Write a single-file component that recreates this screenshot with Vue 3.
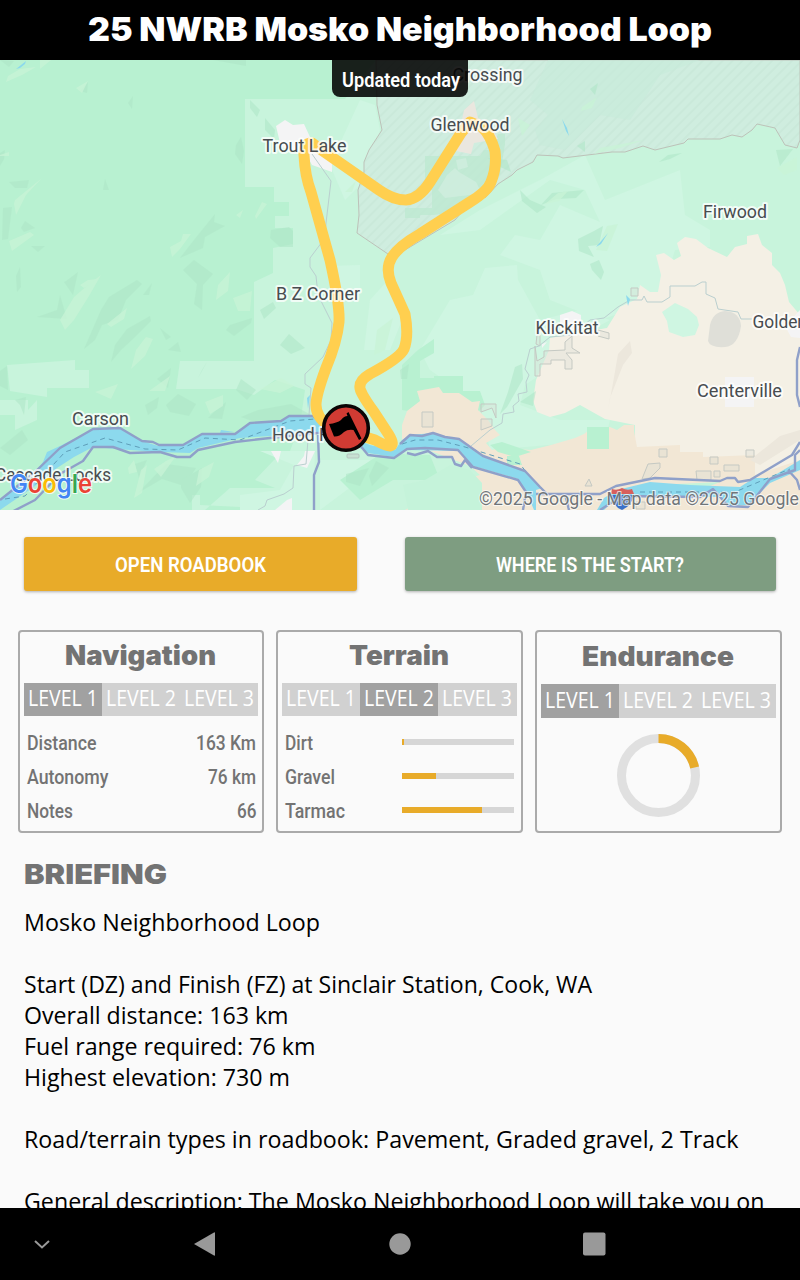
<script setup>
import { h } from 'vue';

// Single line of text squeezed or stretched to a known width.
const FitText = (props) => h('svg', { width: props.width, height: '1em', overflow: 'visible' }, [
  h('text', { x: 0, y: '.8em', textLength: props.width, lengthAdjust: 'spacingAndGlyphs', fill: 'currentColor' }, props.text)
]);
FitText.props = ['text', 'width'];

const levels = [['LEVEL 1', 70], ['LEVEL 2', 70], ['LEVEL 3', 70]];

const cards = [
  { title: 'Navigation', width: 151, level: 0 },
  { title: 'Terrain', width: 100, level: 1 },
  { title: 'Endurance', width: 152, level: 0 }
];

const stats = [
  { label: 'Distance', lw: 69.5, value: '163 Km', vw: 60 },
  { label: 'Autonomy', lw: 81.5, value: '76 km', vw: 48 },
  { label: 'Notes', lw: 46, value: '66', vw: 19.5 }
];

const terrain = [
  { label: 'Dirt', width: 28, percent: 2 },
  { label: 'Gravel', width: 50, percent: 30.4 },
  { label: 'Tarmac', width: 60, percent: 71.5 }
];

const briefing = [
  ['Mosko Neighborhood Loop', 296],
  null,
  ['Start (DZ) and Finish (FZ) at Sinclair Station, Cook, WA', 568],
  ['Overall distance: 163 km', 264.5],
  ['Fuel range required: 76 km', 291.5],
  ['Highest elevation: 730 m', 266],
  null,
  ['Road/terrain types in roadbook: Pavement, Graded gravel, 2 Track', 714.5],
  null,
  ['General description: The Mosko Neighborhood Loop will take you on', 740.5]
];

const places = [
  { name: 'Crossing', x: 452.5, y: 81, width: 70 },
  { name: 'Glenwood', x: 430.5, y: 131, width: 79 },
  { name: 'Trout Lake', x: 262.5, y: 152, width: 84 },
  { name: 'Firwood', x: 703, y: 218, width: 64 },
  { name: 'B Z Corner', x: 276, y: 300, width: 84 },
  { name: 'Klickitat', x: 535.5, y: 333.5, width: 63 },
  { name: 'Goldendale', x: 752.5, y: 328, width: 87 },
  { name: 'Centerville', x: 697, y: 397, width: 85 },
  { name: 'Carson', x: 72, y: 425, width: 57 },
  { name: 'Hood River', x: 272, y: 441, width: 86 },
  { name: 'Cascade Locks', x: -5, y: 481, width: 116 }
];

// Relief facets on the forest, darker and lighter than the base green.
const darkFacets = [
  '0,60 14,61 9,67', '80,91 88,82 87,93', '128,103 133,96 132,109', '236,145 241,137 244,151 242,164 235,154',
  '250,100 260,110 257,117 250,108', '265,118 275,130 274,139 265,130', '0,153 5,150 4,159 0,166',
  '9,182 29,180 27,188 15,188', '3,208 12,207 8,239 2,240', '105,179 109,190 103,190', '21,228 25,221 35,228 24,232',
  '31,246 45,246 38,252', '194,240 215,214 214,222 225,226 205,237 203,248 180,258', '271,230 289,227 293,231 293,247 280,247 270,238',
  '213,60 246,60 246,66', '16,276 20,267 21,287 17,292', '37,317 57,310 60,295 67,319', '66,281 78,272 73,295 64,282',
  '101,310 109,297 137,280 142,284 126,300 118,320 102,325 95,340 84,349', '127,329 150,316 151,321 134,338 121,350 111,362 115,345',
  '143,295 152,283 149,295', '160,328 171,337 166,340', '168,350 178,342 181,352', '183,270 194,260 213,274 203,285 202,310 194,304 197,284',
  '230,325 252,318 251,323 234,336 226,330', '260,310 273,302 276,308 264,319', '280,345 289,334 305,348 291,354',
  '157,379 171,368 168,388', '198,378 207,362 202,370', '236,390 241,379 256,390 247,400', '166,405 178,394 196,404 189,416 170,412',
  '214,412 226,402 222,419 208,418', '241,417 258,410 291,404 313,416 277,421 260,424', '145,405 159,397 157,408 148,415',
  '15,400 26,397 24,415 20,405', '0,371 7,366 8,390 0,386', '0,448 22,430 28,440 10,455', '166,464 196,468 184,486 162,479 138,493',
  '181,480 202,468 201,487 190,503 181,488', '135,464 147,460 139,478', '346,474 369,468 360,486 346,482',
  '376,461 389,468 372,486 369,476', '541,205 552,193 584,190 576,198 556,199', '578,239 594,231 603,226 599,245 588,246 594,257 579,251',
  '488,158 507,160 511,172 496,165', '577,146 585,141 585,152', '590,89 598,83 595,95', '659,162 668,155 682,153 670,159',
  '776,150 793,149 780,166', '520,190 530,200 546,207 537,213 522,201', '515,367 522,364 523,379 507,407 500,414 508,392',
  '400,370 409,364 407,379 401,379', '520,402 536,391 533,406', '590,264 599,260 604,272 601,280 592,270'
];
const lightFacets = [
  '8,76 20,69 36,67 22,75 6,82', '40,60 51,60 40,69', '76,88 88,81 82,93', '0,155 9,152 9,156 0,156', '15,200 42,178 26,195 16,215 14,204',
  '9,241 30,232 34,235 12,251', '170,247 181,241 183,234 191,234 180,249 172,257', '236,215 243,210 240,218', '255,216 262,202 267,204 256,219',
  '345,192 356,181 352,192', '60,320 74,297 89,284 101,275 89,296 74,320 65,330', '107,324 127,308 124,319 111,327',
  '136,350 146,337 153,339 145,356 131,369', '80,285 88,280 98,279 84,288', '218,285 230,272 228,291 216,300', '233,298 252,291 250,311 238,311',
  '95,392 118,384 111,399', '149,391 170,376 165,391', '205,402 223,395 223,406 210,414', '260,389 281,378 294,386 280,393',
  '128,468 134,460 137,472 129,474', '141,470 147,465 142,493 134,498', '154,469 166,461 176,456 161,477', '199,470 214,462 209,477 196,486',
  '68,495 83,480 99,474 86,492', '545,204 558,193 568,191 559,201', '600,148 644,140 620,148 594,154', '582,107 597,97 592,108 581,111',
  '518,118 530,125 522,136', '777,168 797,157 797,170 784,175', '596,250 607,226 618,224 607,251', '377,330 393,318 385,350 374,355'
];

const blocks = [
  '535,346 535,376 540,376 540,364 551,364 551,360 565,360 565,369 572,369 572,360 566,353 580,353 572,348 572,336 565,342 565,350 544,351 544,357 537,361',
  '422,412 433,412 433,427 422,427', '481,404 496,404 496,418 492,408 481,412', '481,419 492,419 492,426 481,430',
  '537,335 540,335 540,346 536,344', '598,330 609,333 609,339 598,336', '631,288 638,288 638,296 631,296',
  '659,449 667,449 667,457 659,457', '648,464 660,463 660,468 650,478 642,479', '696,471 711,471 711,480 697,480',
  '710,457 718,457 718,464 710,464', '724,465 739,465 739,471 724,471', '746,450 754,450 754,457 746,457',
  '589,479 592,486 585,486', '714,471 720,471 720,477 714,477', '636,502 645,502 645,509 636,509'
];
</script>

<template>
  <div class="screen">
    <header class="topbar"><FitText class="title" text="25 NWRB Mosko Neighborhood Loop" :width="624" /></header>

    <div class="map">
      <svg class="map-canvas" viewBox="0 60 800 450" width="800" height="450">
        <defs>
          <pattern id="hatch" width="7" height="7" patternUnits="userSpaceOnUse" patternTransform="rotate(45)">
            <rect width="7" height="7" fill="#cfeddf" />
            <rect width="2" height="7" fill="#cae9da" />
          </pattern>
        </defs>
        <rect y="60" width="800" height="450" fill="#b8f1d1" />
        <!-- lower ground -->
        <path d="M245 99H345L376 60H800V510H300L200 505V495H192V510H205L230 488H275L255 480L274 460 290 451 300 425 305 390 275 380 254 395 236 389H176L180 361H254V282L273 273V248L293 244V228H275V216H289V202H274V187H245Z" fill="#c8f4dc" />
        <path d="M7 365L75 360V370H89V388H47V397L10 391ZM28 410L37 400V420L15 430V415ZM0 400H28V415H0Z" fill="#c8f4dc" />
        <path d="M360 100L375 105 380 130 365 180 345 200 330 165ZM330 266L360 265 360 290 345 300ZM370 300L388 280 402 320 390 350 364 350ZM440 235L480 210 540 180 585 155 605 200 680 170 685 215 710 230 710 247 675 250 660 300 600 320 550 300 540 270 500 255 515 235 540 240 560 205 600 222 585 190 550 180 480 230ZM485 268L517 265 518 280 540 320 580 310 610 320 555 350 540 375 525 385 520 405 560 420 610 420 605 440 490 450 480 405 430 370 420 350 450 300 473 295Z" fill="#cff6e2" />
        <path d="M260 451H315L313 510H240V495L280 490 294 465ZM320 460H370L360 480 320 510Z" fill="#cff6e2" />
        <path d="M418 350L434 339V353L420 361V378H434V376H463V391H480L485 405 470 420 402 410V365Z" fill="#b8f1d1" />
        <path d="M387 450L408 455 430 455 440 480 430 480H393L360 500 340 480Z" fill="#b8f1d1" />
        <!-- open country -->
        <path d="M656 255L664 253 674 260 681 256 677 243 685 237 696 239 708 248 727 257 735 247 747 244 747 236 758 234 762 245 772 253V265L780 273 785 285 789 302 800 315V510H635V425L605 419 580 405 565 413 550 417 537 412 533 401 536 380 549 350 550 338 607 328 620 307 637 299 640 285 650 292 658 292 661 275Z" fill="#f4f0e5" />
        <path d="M402 425L407 411 420 401 417 391 439 387 443 393 459 393 472 402 480 401 478 410 488 420 495 430 500 435 486 443 492 450 500 448 531 450 551 445 575 438 584 434 592 428 610 427 617 430 624 425H634V431L637 447 680 445V452H703V457L755 455V475L800 460V510H405L460 480 480 475 470 466 402 440Z" fill="#f2e7d5" />
        <path d="M587 427H609V449H587ZM507 456L519 456 522 465 507 465ZM490 445L502 442 531 452 515 457 498 452Z" fill="#b8f1d1" />
        <path d="M662 312L675 303 688 309 697 317 699 325 695 335 683 337 669 332 667 321Z" fill="#cff6e2" />
        <path d="M408 510L403 485 425 480 450 465 470 470 482 483 482 510ZM655 485L720 482 700 490 648 491Z" fill="#c5f3da" />
        <path d="M710 325Q713 312 725 311Q740 312 741 326Q738 346 725 347Q710 348 708 341Z" fill="#dfdfd8" />
        <path d="M618 354L630 341 632 353 623 365 610 398 608 410 613 383ZM750 460L780 436 800 430V440L760 465Z" fill="#ece7dc" />
        <path d="M725 377H754V407H725ZM800 310L785 326 791 337 800 338ZM560 315L572 311 581 315V330H560ZM542 344L547 342 542 348ZM276 126L285 120 293 125 304 124 310 137 325 150 332 162V172L312 165 306 154 281 147ZM271 451H281L278 463ZM305 451H315L307 468 297 465 304 456ZM287 500L292 498V510H275Z" fill="#f4f4f5" />

        <!-- reservation -->
        <path d="M376 60L377 105 382 130 369 150 364 162 364 172 358 190 359 215 357 233 388 254 405 250 455 220 468 205 482 193 485 198 498 184 512 175 517 170 533 162 537 155 558 156 563 158 612 152 625 152 643 146 655 150 684 143 688 139 720 139 732 135 742 137 752 130 757 124 775 128 785 145 797 148 800 140V60Z" fill="url(#hatch)" stroke="#bdc2b9" />
        <path d="M425 156H480L484 150H492L498 134H505V144L500 175 470 195 448 213 433 215H420V218H405V208H432V190L425 186Z" fill="#bde9d1" opacity=".8" />
        <path d="M447 175L455 168 459 172 476 182 480 190 470 195 445 198 438 190ZM456 160L466 158 468 167 458 170Z" fill="#cfeddf" opacity=".8" />
        <path d="M470 60H700L660 75 630 120 600 115 565 150 540 145 535 130 548 115 530 100 548 60Z" fill="#c6ebd9" opacity=".5" />
        <path d="M474 101L464 110 462 120 447 145 456 151 471 154 474 143 498 139 490 124 478 118Z" fill="#eae7df" />

        <g fill="#aee6c7" opacity=".55"><polygon v-for="p in darkFacets" :key="p" :points="p" /></g>
        <g fill="#c9f4d7" opacity=".75"><polygon v-for="p in lightFacets" :key="p" :points="p" /></g>
        <g fill="#d9ddd4" fill-opacity=".35" stroke="#c5c9c3"><polygon v-for="p in blocks" :key="p" :points="p" /></g>

        <!-- minor roads -->
        <g fill="none" stroke="#bacfcf">
          <path d="M312 154L331 181 326 223 325 238 310 258V267L316 276 318 295 332 323 331 340 323 357 305 374V384L311 388 309 415M310 416L306 464 294 466 293 488 284 494 267 500 265 506 258 510" />
          <path d="M471 446L490 430 502 423 503 414 514 412 513 406 519 401 518 394 527 392 526 382 529 375 525 369 530 349 539 346 550 337 572 335 590 320 604 318 618 307 630 300H642L644 296 647 302H662L670 297V286H695L702 282H706V294L715 298 718 309 738 312 741 319H752" />
        </g>

        <!-- Columbia river -->
        <path d="M0 500L35 472 43 462 47 452 60 446 93 429 120 428 142 441 158 446 183 445 202 434 235 434 250 424 281 421 289 416H313L325 425 370 445 395 450 402 440 410 435 433 433 459 440 483 457 525 471 542 488 536 490V510H534L526 491 518 479 473 466 460 451 407 450 394 457 368 453 355 445 325 432 270 436 240 438 198 448 190 453 160 452 130 450 93 447 74 457 57 468 35 486 0 510Z" fill="#8cd9ed" />
        <path d="M597 510L604 498 617 490 650 482 690 485 740 487 754 478H770L800 460V470L770 483 748 505 728 506 720 497 640 496 618 496 604 510ZM307 398L310 395 308 409ZM221 430L234 432 220 433ZM626 295L630 299 628 306Z" fill="#8cd9ed" />
        <path d="M16 69L26 61 25 64 20 68ZM562 119L567 128 569 136 566 131ZM596 247L608 233 601 244Z" fill="#8cd9ed" />
        <path d="M5 499L25 496 53 465 65 452 105 438 145 449 178 450 205 438 240 440 290 421 315 419M402 444L415 440H438L465 447 520 464 530 477M640 492H735L775 475 790 469" fill="none" stroke="#5f9eb9" stroke-dasharray="5 4" />
        <g class="highway">
          <path d="M0 500L35 472 60 448 93 429 120 428 142 441 153 442 159 445H183L202 434H235L250 423 281 421 289 416H313L325 425M400 444L410 435 422 436 433 433 445 437 459 439 483 456 525 471 540 487 547 494H600L616 486 655 478 720 481 727 478H735L738 482 750 480 792 455 800 442M0 518L35 500 60 474 83 461 93 447H113L130 453 160 452 177 457H190L198 450 235 442 270 438 318 433H350L368 455 394 458 407 449 425 448 458 450 473 467 518 480 526 492 523 510M318 435L319 462 314 475V510M407 453L415 455 428 451 437 457 452 457 455 464 461 466 465 460 472 468M536 494H565L569 510M600 510L622 496 700 497 713 489 728 506 748 507 770 479 795 470V455L800 450M800 347L797 360V395L800 407M788 470L797 480 800 490" />
        </g>

        <rect x="347" y="454" width="12" height="4" rx="1" fill="#c7e1d2" stroke="#b4c4bd" />
        <path class="route" d="M312 143Q303 143 304 155Q305 176 311 192L330 260Q340 305 339 322Q337 342 326 368Q316 395 316 405Q316 417 329 426L346 431L375 440Q386 446 390 446Q395 445 389 435L374 412Q358 390 360 386Q360 380 370 374Q400 358 404 349Q409 336 405 314L391 283Q385 268 392 257Q399 246 420 234L470 202Q488 191 491 182Q497 167 495 151Q490 134 482 127L470 122L461 133L430 182Q419 199 406 200Q393 200 379 190L323 151Z" />

        <g class="places">
          <text v-for="p in places" :key="p.name" :x="p.x" :y="p.y" :textLength="p.width" lengthAdjust="spacingAndGlyphs">{{ p.name }}</text>
        </g>

        <circle cx="346" cy="428" r="22.3" fill="#d13b33" stroke="#0a0505" stroke-width="3.600" />
        <path d="M346.500 413.500L348.500 412 361.500 438.500 359 440 353.500 430Q348 429 344 432Q339 437 334 436.500L329 424Q337 423 341 420Q344 416 347.500 416Z" fill="#000" />

        <path d="M612 489Q617 491 622 488Q627 491 632 489L634 494H611Z" fill="#d75f5d" />
        <path d="M612 495H633Q633 505 622 510Q612 506 612 495Z" fill="#3970c8" />
        <text class="google" x="10" y="492.500" textLength="82" lengthAdjust="spacingAndGlyphs"><tspan fill="#4285f4">G</tspan><tspan fill="#ea4335">o</tspan><tspan fill="#fbbc05">o</tspan><tspan fill="#4285f4">g</tspan><tspan fill="#34a853">l</tspan><tspan fill="#ea4335">e</tspan></text>
        <text class="copyright" x="479" y="505" textLength="320" lengthAdjust="spacingAndGlyphs">©2025 Google - Map data ©2025 Google</text>
      </svg>
      <div class="updated"><FitText text="Updated today" :width="118" /></div>
    </div>

    <main class="content">
      <div class="buttons">
        <button class="btn open"><FitText text="OPEN ROADBOOK" :width="151" /></button>
        <button class="btn start"><FitText text="WHERE IS THE START?" :width="188" /></button>
      </div>

      <div class="cards">
        <section v-for="(card, i) in cards" :key="card.title" class="card" :class="{ endurance: i === 2 }">
          <h2><FitText :text="card.title" :width="card.width" /></h2>
          <div class="levels">
            <span v-for="([name, width], n) in levels" :key="name" class="level" :class="{ active: n === card.level }">
              <FitText :text="name" :width="width" />
            </span>
          </div>
          <div v-if="i === 0" class="rows">
            <div v-for="s in stats" :key="s.label" class="row">
              <FitText :text="s.label" :width="s.lw" />
              <FitText :text="s.value" :width="s.vw" />
            </div>
          </div>
          <div v-else-if="i === 1" class="rows">
            <div v-for="t in terrain" :key="t.label" class="row">
              <FitText :text="t.label" :width="t.width" />
              <div class="bar"><div class="bar-fill" :style="{ width: t.percent + '%' }"></div></div>
            </div>
          </div>
          <svg v-else class="ring" width="84" height="84" viewBox="0 0 84 84">
            <circle cx="41.500" cy="41.500" r="37" fill="none" stroke="#e0e0e0" stroke-width="9" />
            <circle cx="41.500" cy="41.500" r="37" fill="none" stroke="#e8ab29" stroke-width="9" pathLength="100" stroke-dasharray="21.5 100" transform="rotate(-90 41.5 41.5)" />
          </svg>
        </section>
      </div>

      <h2 class="briefing-title"><FitText text="BRIEFING" :width="143" /></h2>
      <div class="briefing">
        <div v-for="(line, i) in briefing" :key="i" class="line">
          <FitText v-if="line" :text="line[0]" :width="line[1]" />
        </div>
      </div>
    </main>

    <nav class="navbar">
      <svg width="800" height="72" viewBox="0 0 800 72">
        <path d="M35 33L42 39.5 49 33" fill="none" stroke="#999" stroke-width="2" />
        <path d="M194 36L214 24.5Q215 24 215 25V47Q215 48 214 47.500Z" fill="#999" />
        <circle cx="400" cy="36" r="10.700" fill="#999" />
        <rect x="583" y="24.500" width="22.500" height="23" rx="2" fill="#999" />
      </svg>
    </nav>
  </div>
</template>

<style>
body {
  margin: 0;
  background: #fafafa;
}
</style>

<style scoped>
.screen {
  width: 800px;
  height: 1280px;
  overflow: hidden;
  display: flex;
  flex-direction: column;
  background: #fafafa;
  font-family: Roboto, sans-serif;
}

.topbar {
  height: 60px;
  flex: none;
  background: #000;
  color: #fff;
  display: flex;
  justify-content: center;
  align-items: flex-start;
}

.title {
  margin-top: 14.6px;
  font: 900 33px Inter, sans-serif;
}

.map {
  position: relative;
  height: 450px;
  flex: none;
}

.map-canvas {
  display: block;
}

.highway path {
  fill: none;
  stroke: #8fa0c9;
  stroke-width: 2.4;
  stroke-linejoin: round;
}

.route {
  fill: none;
  stroke: #ffcf4f;
  stroke-width: 11;
  stroke-linejoin: round;
}

.places text {
  font-size: 18px;
  fill: #484c50;
  stroke: #fff;
  stroke-opacity: .75;
  stroke-width: 4px;
  stroke-linejoin: round;
  paint-order: stroke;
}

.google {
  font: 600 26px Inter, sans-serif;
  stroke: #fff;
  stroke-opacity: .8;
  stroke-width: 2px;
  paint-order: stroke;
}

.copyright {
  font-size: 18px;
  fill: #707579;
  stroke: #fff;
  stroke-opacity: .7;
  stroke-width: 2px;
  paint-order: stroke;
}

.updated {
  position: absolute;
  top: 0;
  left: 332px;
  width: 136px;
  height: 37px;
  display: flex;
  justify-content: center;
  align-items: center;
  background: rgba(0, 0, 0, .87);
  border-radius: 0 0 8px 8px;
  color: #fff;
  font-size: 21px;
  font-weight: 600;
}

.updated svg {
  margin: 4px 0 0 2px;
}

.content {
  flex: 1;
  min-height: 0;
  overflow: hidden;
}

.buttons {
  display: flex;
  gap: 48px;
  padding: 27px 24px 0;
}

.btn {
  height: 54px;
  border: none;
  border-radius: 3px;
  padding: 0;
  display: flex;
  justify-content: center;
  align-items: center;
  color: #fff;
  font: 600 21px Roboto, sans-serif;
  box-shadow: 0 1px 3px rgba(0, 0, 0, .3);
}

.btn svg {
  margin: 2px 1px 0 0;
}

.open {
  width: 333px;
  background: #e8ab29;
}

.start {
  width: 371px;
  background: #7e9d81;
}

.cards {
  display: grid;
  grid-template-columns: 246px 247px 247px;
  gap: 12px;
  padding: 39px 18px 0;
}

.card {
  box-sizing: border-box;
  height: 203px;
  border: 2px solid #aaa;
  border-radius: 4px;
  padding: 0 4px;
  color: #737373;
}

h2 {
  margin: 0;
  height: 51px;
  display: flex;
  justify-content: center;
  color: #737373;
  font: 900 27px Inter, sans-serif;
}

.card h2 svg {
  margin: 11.4px 1px 0 0;
}

.levels {
  height: 33px;
  display: grid;
  grid-template-columns: 78px 78px 1fr;
  background: #d1d1d1;
}

.level {
  display: flex;
  align-items: center;
  padding-left: 4px;
  color: #fff;
  font: 21px "Open Sans", sans-serif;
}

.active {
  background: #a1a1a1;
}

.endurance h2 {
  height: 52px;
}

.endurance h2 svg {
  margin-top: 12.4px;
}

.endurance .levels {
  height: 34px;
}

.endurance .level svg {
  margin-top: 1px;
}

.rows {
  padding: 10px 2px 0 3px;
}

.row {
  height: 34px;
  display: flex;
  justify-content: space-between;
  align-items: center;
  font-size: 20px;
  font-weight: 500;
}

.row svg {
  margin-top: 2px;
}

.bar {
  width: 112px;
  height: 6px;
  margin: -2px 1px 0 0;
  background: #d6d6d6;
}

.bar-fill {
  height: 100%;
  background: #e8ab29;
}

.ring {
  display: block;
  margin: 16px auto 0;
}

.briefing-title {
  justify-content: flex-start;
  margin: 29.4px 0 0 24px;
  height: 46.600px;
}

.briefing {
  padding-left: 24px;
}

.line {
  height: 31px;
  display: flex;
  align-items: center;
  color: #000;
  font: 23px "Open Sans", sans-serif;
}

.navbar {
  height: 72px;
  flex: none;
  background: #000;
}

.navbar svg {
  display: block;
}
</style>
